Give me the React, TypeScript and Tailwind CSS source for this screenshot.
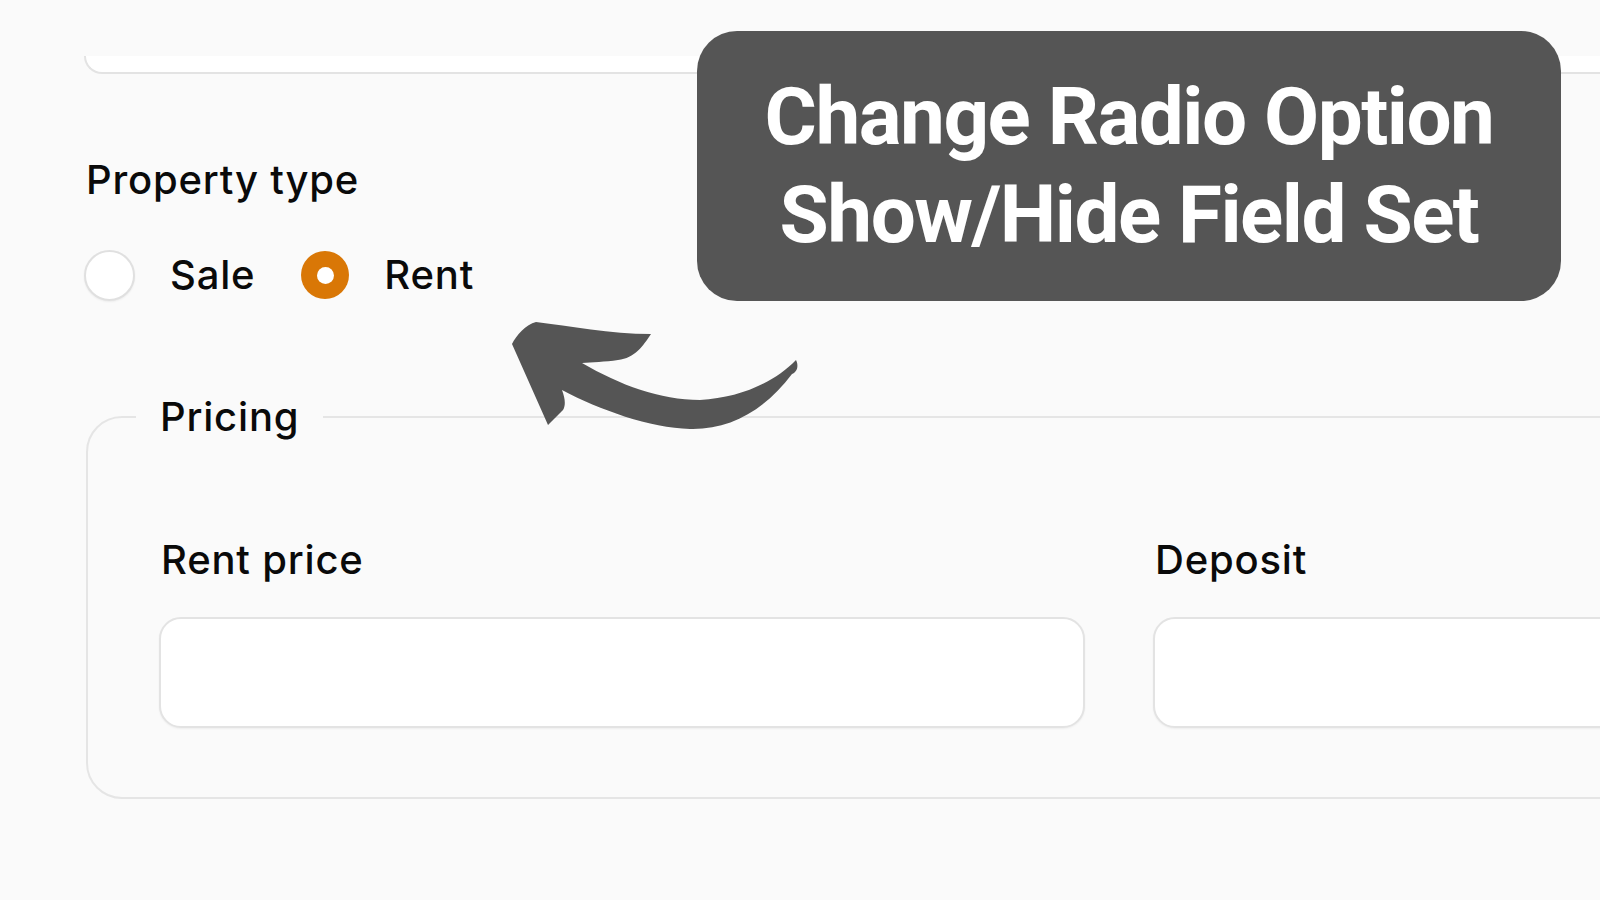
import React from "react";

const labelCls =
  "font-['Inter',sans-serif] text-[40px] leading-[56px] font-medium tracking-[0.8px] text-[#0a0a0a]";

function Radio({ label, checked }: { label: string; checked?: boolean }) {
  return (
    <label className="flex items-center gap-[35px]">
      {checked ? (
        <span className="flex h-[48px] w-[48px] items-center justify-center rounded-full bg-[#d97706]">
          <span className="h-[17px] w-[17px] rounded-full bg-white" />
        </span>
      ) : (
        <span className="h-[51px] w-[51px] rounded-full border-2 border-[#e0e0e0] bg-white shadow-[0_1px_2px_rgba(0,0,0,0.06)]" />
      )}
      <span className={labelCls}>{label}</span>
    </label>
  );
}

function Field({ label }: { label: string }) {
  return (
    <div className="flex flex-col gap-[29px]">
      <span className={`${labelCls} pl-[2px]`}>{label}</span>
      <div className="h-[111px] rounded-[22px] border-2 border-[#e3e3e3] bg-white shadow-[0_1px_2px_rgba(0,0,0,0.05)]" />
    </div>
  );
}

function Arrow() {
  return (
    <svg
      className="absolute left-[500px] top-[315px]"
      width="300"
      height="120"
      viewBox="500 315 300 120"
    >
      <path
        fill="#555555"
        d="M512 344 C516 336 526 324 536 322 C570 326 610 334 651 334 C643 346 635 358 618 360 C605 362 592 362 582 363 C620 385 660 400 700 400 C740 398 775 382 796 360 C799 366 797 372 792 374 C765 410 730 430 690 429 C650 428 600 410 562 390 C565 398 566 405 563 410 L548 425 Z"
      />
    </svg>
  );
}

export default function App() {
  return (
    <div className="relative h-[900px] w-[1600px] overflow-hidden bg-[#fafafa]">
      <div className="flex w-[2152px] flex-col pl-[84px] pt-[56px]">
        <div className="h-[18px] rounded-bl-[22px] border-b-2 border-l-2 border-[#e3e3e3] bg-white" />

        <div className={`${labelCls} mt-[78px] pl-[2px]`}>Property type</div>

        <div className="mt-[39px] flex items-center gap-[46px]">
          <Radio label="Sale" />
          <Radio label="Rent" checked />
        </div>

        <fieldset className="ml-[2px] mt-[86px] rounded-[36px] border-2 border-[#e5e5e5] px-[71px] pb-[69px] pt-[87px]">
          <legend className={`${labelCls} -ml-[23px] px-6`}>Pricing</legend>
          <div className="grid grid-cols-2 gap-[68px]">
            <Field label="Rent price" />
            <Field label="Deposit" />
          </div>
        </fieldset>
      </div>

      <div className="absolute left-[697px] top-[31px] flex h-[270px] w-[864px] flex-col items-center justify-center rounded-[40px] bg-[#555555] font-['Roboto',sans-serif] text-[80px] font-bold leading-[98px] tracking-[-1.5px] text-white">
        <span>Change Radio Option</span>
        <span>Show/Hide Field Set</span>
      </div>

      <Arrow />
    </div>
  );
}
